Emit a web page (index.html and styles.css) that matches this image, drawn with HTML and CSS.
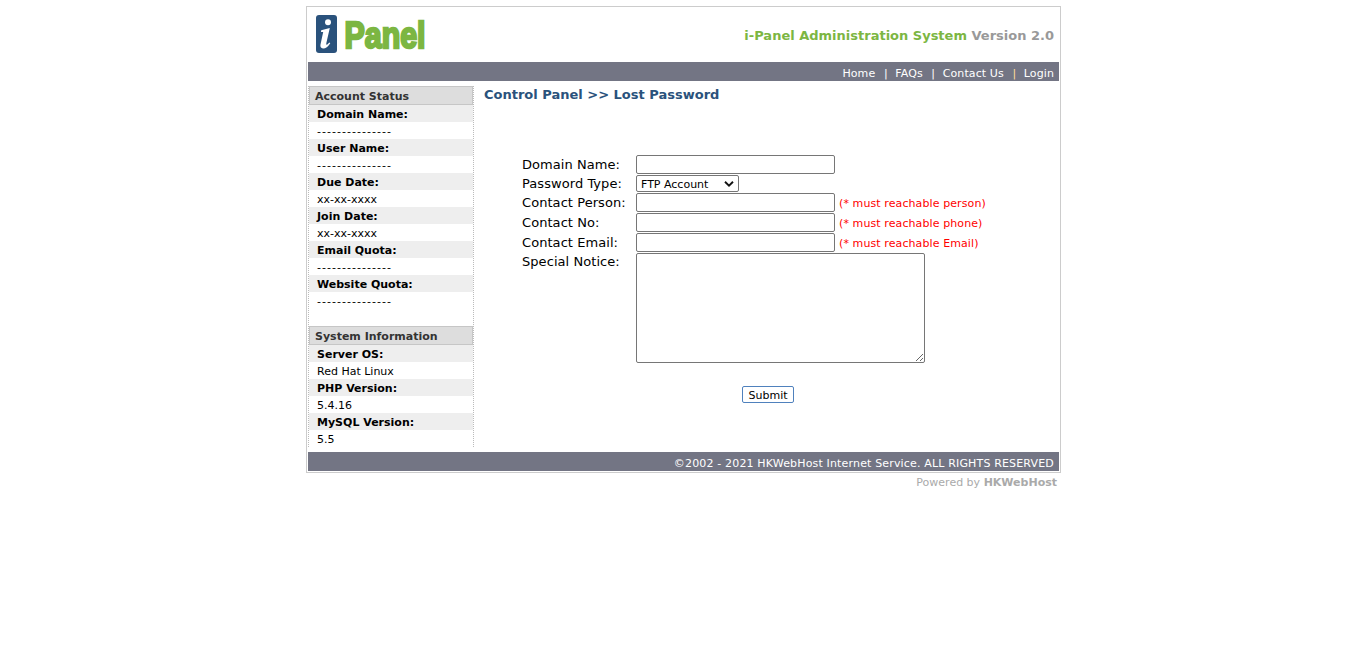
FILE: index.html
```html
<!DOCTYPE html>
<html lang="en">
<head>
<meta charset="utf-8">
<title>i-Panel - Lost Password</title>
<link rel="stylesheet" href="styles.css">
</head>
<body>
<div class="page">
  <div class="panel">
    <header class="header">
      <svg class="logo" width="130" height="46" viewBox="0 0 130 46" role="img" aria-label="i Panel">
        <rect x="1" y="1" width="21" height="38" rx="3" fill="#2a527c"/>
        <circle cx="13" cy="8.3" r="3" fill="#fff"/>
        <path d="M6.2 16.2 L14.800 14 L11.3 29.2 Q11 31.3 12.300 30.5 L14.4 28.500 L15.3 29.300 Q11.5 34.9 8 34.6 Q4.800 34 5.500 30.5 L8.2 18 L6 18 Z" fill="#fff"/>
        <text class="logo-text" x="29.500" y="33.500" textLength="81" lengthAdjust="spacingAndGlyphs">Panel</text>
      </svg>
      <div class="product"><span class="product-name">i-Panel Administration System</span> Version 2.0</div>
    </header>
    <nav class="nav"><a>Home</a><i>|</i><a>FAQs</a><i>|</i><a>Contact Us</a><i class="warm">|</i><a>Login</a></nav>
    <div class="body">
      <aside class="sidebar">
        <h2>Account Status</h2>
        <dl>
          <dt>Domain Name:</dt><dd class="blank">---------------</dd>
          <dt>User Name:</dt><dd class="blank">---------------</dd>
          <dt>Due Date:</dt><dd>xx-xx-xxxx</dd>
          <dt>Join Date:</dt><dd>xx-xx-xxxx</dd>
          <dt>Email Quota:</dt><dd class="blank">---------------</dd>
          <dt>Website Quota:</dt><dd class="blank">---------------</dd>
        </dl>
        <h2 class="second">System Information</h2>
        <dl>
          <dt>Server OS:</dt><dd>Red Hat Linux</dd>
          <dt>PHP Version:</dt><dd>5.4.16</dd>
          <dt>MySQL Version:</dt><dd>5.5</dd>
        </dl>
      </aside>
      <main class="main">
        <h1>Control Panel &gt;&gt; Lost Password</h1>
        <form class="form">
          <label>Domain Name:</label><div><input type="text"></div>
          <label class="tight">Password Type:</label><div><span class="select">FTP Account<svg width="10" height="6" viewBox="0 0 10 6"><path d="M1 .8 L5 4.600 L9 .8" fill="none" stroke="#111" stroke-width="1.900"/></svg></span></div>
          <label>Contact Person:</label><div><input type="text"><em>(* must reachable person)</em></div>
          <label>Contact No:</label><div><input type="text"><em>(* must reachable phone)</em></div>
          <label>Contact Email:</label><div><input type="text"><em>(* must reachable Email)</em></div>
          <label class="tight">Special Notice:</label><div><textarea></textarea></div>
        </form>
        <button class="submit" type="button">Submit</button>
      </main>
    </div>
    <footer class="footer">©2002 - 2021 HKWebHost Internet Service. ALL RIGHTS RESERVED</footer>
  </div>
  <div class="powered">Powered by <b>HKWebHost</b></div>
</div>
</body>
</html>
```
FILE: styles.css
```css
* { box-sizing: border-box; }
body { margin: 0; background: #fff; color: #000; font: 11px/17px Verdana, "DejaVu Sans", sans-serif; }
.page { width: 755px; margin: 6px 0 0 306px; }
.panel { height: 467px; padding: 1px; border: 1px solid #ccc; }
.header { display: flex; justify-content: space-between; height: 54px; padding: 6px 5px 0 7px; }
.logo { display: block; }
.logo-text { font: bold 36px "Liberation Sans", Arial, sans-serif; fill: #7cb642; stroke: #7cb642; stroke-width: 2.400px; }
.product { margin-top: 13px; font-size: 13px; font-weight: bold; color: #999; white-space: nowrap; }
.product-name { color: #7cb642; }
.nav, .footer { display: flex; justify-content: flex-end; height: 19px; padding: 2px 5px 0 0; background: #737584; color: #fff; white-space: nowrap; }
.nav { line-height: 19px; letter-spacing: .1px; }
.footer { line-height: 19px; letter-spacing: .16px; }
.nav i { width: 20px; padding-left: 1px; text-align: center; font-style: normal; }
.nav .warm { color: #ffdf9a; }
.body { display: flex; height: 371px; padding-top: 5px; }
.sidebar { width: 166px; height: 361px; border: 1px dotted #bbb; border-width: 0 1px; }
.sidebar h2 { height: 19px; margin: 0; padding-left: 5px; border: 1px solid #c6c6c6; background: #ddd; color: #333; font-size: 11px; line-height: 19px; }
.sidebar h2.second { margin-top: 17px; }
.sidebar dl, .sidebar dd { margin: 0; }
.sidebar dt, .sidebar dd { height: 17px; padding-left: 8px; line-height: 19px; }
.sidebar .blank { letter-spacing: 1.030px; }
.sidebar dt { background: #eee; font-weight: bold; }
.main { flex: 1; padding-left: 10px; }
.main h1 { margin: 0; color: #2a527c; font-size: 13px; line-height: 17px; }
.form { display: grid; grid-template-columns: 114px 1fr; grid-template-rows: 20px 18px 20px 20px 20px 110px; padding: 52px 0 0 38px; font-size: 13px; }
.form label { line-height: 19px; letter-spacing: .06px; white-space: nowrap; }
.form .tight { line-height: 17px; }
.form div { display: flex; align-items: flex-start; }
.form input { display: block; width: 199px; height: 19px; margin: 0; padding: 1px 2px; border: 1px solid #767676; border-radius: 2px; background: #fff; }
.form em { margin-left: 4px; color: #f00; font-size: 11px; font-style: normal; line-height: 21px; letter-spacing: .1px; white-space: nowrap; }
.select { display: flex; align-items: center; justify-content: space-between; width: 103px; height: 17px; padding: 1px 4px 0; border: 1px solid #767676; border-radius: 2px; font-size: 11px; line-height: 15px; letter-spacing: 0; }
.form textarea { width: 289px; height: 110px; margin: 0; border: 1px solid #767676; border-radius: 2px; resize: both; }
.submit { display: block; width: 52px; height: 17px; margin: 23px 0 0 258px; padding: 1px 0 0; border: 1px solid #4f81bd; border-radius: 2px; background: #fff; color: #000; font: 11px/15px Verdana, "DejaVu Sans", sans-serif; }
.powered { padding-right: 4px; color: #aaa; line-height: 19px; text-align: right; }
```
